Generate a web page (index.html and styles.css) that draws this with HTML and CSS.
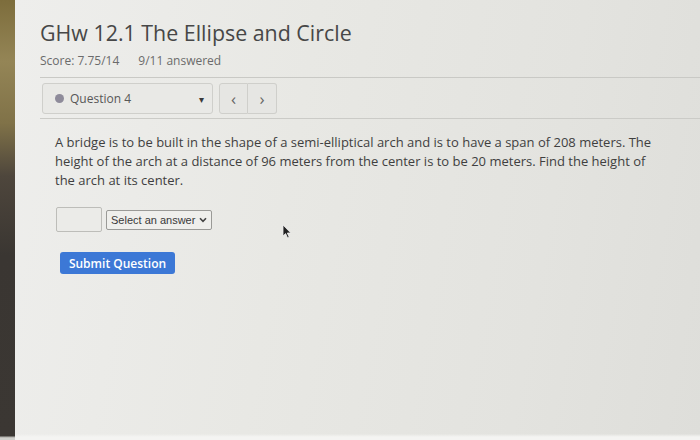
FILE: index.html
```html
<!DOCTYPE html>
<html>
<head>
<meta charset="utf-8">
<link rel="stylesheet" href="styles.css">
</head>
<body>
<div class="screen">
  <div class="bezel"></div>
  <main class="page">
    <h1 class="title">GHw 12.1 The Ellipse and Circle</h1>
    <div class="meta"><span>Score: 7.75/14</span><span>9/11 answered</span></div>
    <div class="qbar">
      <div class="qselect">
        <span class="dot"></span>
        <span class="qlabel">Question 4</span>
        <span class="caret">&#9662;</span>
      </div>
      <div class="nav">
        <button class="navbtn">&lsaquo;</button>
        <button class="navbtn">&rsaquo;</button>
      </div>
    </div>
    <section class="question">
      <p class="qtext">A bridge is to be built in the shape of a semi-elliptical arch and is to have a span of 208 meters. The height of the arch at a distance of 96 meters from the center is to be 20 meters. Find the height of the arch at its center.</p>
      <div class="answer">
        <span class="ansbox"></span>
        <span class="ansselect">Select an answer <svg class="chev" width="8" height="6" viewBox="0 0 8 6"><path d="M1 1.2 L4 4.4 L7 1.2" fill="none" stroke="#444" stroke-width="1.6"/></svg></span>
      </div>
      <button class="submit">Submit Question</button>
    </section>
    <svg class="cursor" width="12" height="16" viewBox="0 0 12 16"><path d="M1 1 L1 12 L3.6 9.6 L5.6 14 L7.2 13.2 L5.3 9 L8.8 9 Z" fill="#222" stroke="#eee" stroke-width="0.8"/></svg>
  </main>
</div>
</body>
</html>
```
FILE: styles.css
```css
html, body {
  margin: 0;
  padding: 0;
}
body {
  width: 700px;
  height: 440px;
  overflow: hidden;
  font-family: "Open Sans", "Noto Sans", sans-serif;
}
.screen {
  display: flex;
  width: 700px;
  height: 440px;
}
.bezel {
  width: 15px;
  flex: none;
  background: linear-gradient(to bottom, #7d6d3c 0%, #948556 14%, #807248 28%, #4e463c 40%, #3a3632 58%, #3b3733 99%, #cfcfcb 99.5%);
}
.page {
  position: relative;
  flex: 1;
  padding: 0 0 0 25px;
  background:
    linear-gradient(to bottom, rgba(255,255,255,0) 98.6%, #f4f4f2 99.3%),
    linear-gradient(100deg, #eeeeec 0%, #e8e8e4 40%, #e3e3df 75%, #dededa 100%);
}
.title {
  margin: 18px 0 0 0;
  font-size: 21.4px;
  line-height: 30px;
  font-weight: 400;
  color: #474747;
}
.meta {
  display: flex;
  gap: 19px;
  margin-top: 4px;
  font-size: 12px;
  line-height: 17px;
  color: #6b6b6b;
  padding-bottom: 8px;
  border-bottom: 1px solid #c9c9c5;
}
.qbar {
  display: flex;
  gap: 6px;
  padding: 5px 0 4px 2px;
  border-bottom: 1px solid #cbcbc7;
}
.qselect {
  display: flex;
  align-items: center;
  height: 29px;
  border: 1px solid #cfcfcb;
  border-radius: 3px;
  background: #e9e9e6;
  padding: 0 0 0 12px;
  width: 157px;
}
.dot {
  width: 9px;
  height: 9px;
  border-radius: 50%;
  background: #8e8b9a;
  margin-right: 6px;
}
.qlabel {
  font-size: 12px;
  color: #575757;
  flex: 1;
}
.caret {
  font-size: 10px;
  color: #3a3a3a;
  margin-right: 8px;
}
.nav {
  display: flex;
}
.navbtn {
  width: 29px;
  height: 31px;
  border: 1px solid #cfcfcb;
  background: #e6e6e3;
  color: #666;
  font-size: 17px;
  font-family: "Open Sans", sans-serif;
  padding: 0;
  line-height: 1;
}
.navbtn:first-child {
  border-radius: 3px 0 0 3px;
}
.navbtn:last-child {
  border-radius: 0 3px 3px 0;
  border-left: none;
}
.question {
  padding: 14px 0 0 15px;
}
.qtext {
  margin: 0;
  width: 605px;
  font-size: 13px;
  line-height: 19px;
  color: #3f3f3f;
}
.answer {
  display: flex;
  align-items: center;
  gap: 4px;
  margin-top: 17px;
  padding-left: 1px;
}
.ansbox {
  width: 44px;
  height: 23px;
  border: 1px solid #bdbdb9;
  border-radius: 2px;
  background: #ebebe8;
}
.ansselect {
  display: flex;
  align-items: center;
  gap: 4px;
  height: 18px;
  padding: 0 4px 0 4px;
  border: 1px solid #9a9a97;
  border-radius: 2px;
  background: #efefec;
  font-family: "Liberation Sans", Arial, sans-serif;
  font-size: 11px;
  color: #3a3a3a;
}
.submit {
  display: block;
  margin: 20px 0 0 5px;
  width: 115px;
  height: 22px;
  padding: 0;
  border: none;
  border-radius: 3px;
  background: #3c78d6;
  color: #fff;
  font-family: "Open Sans", sans-serif;
  font-size: 12px;
  font-weight: 600;
}
.cursor {
  position: absolute;
  left: 267px;
  top: 224px;
}
```
